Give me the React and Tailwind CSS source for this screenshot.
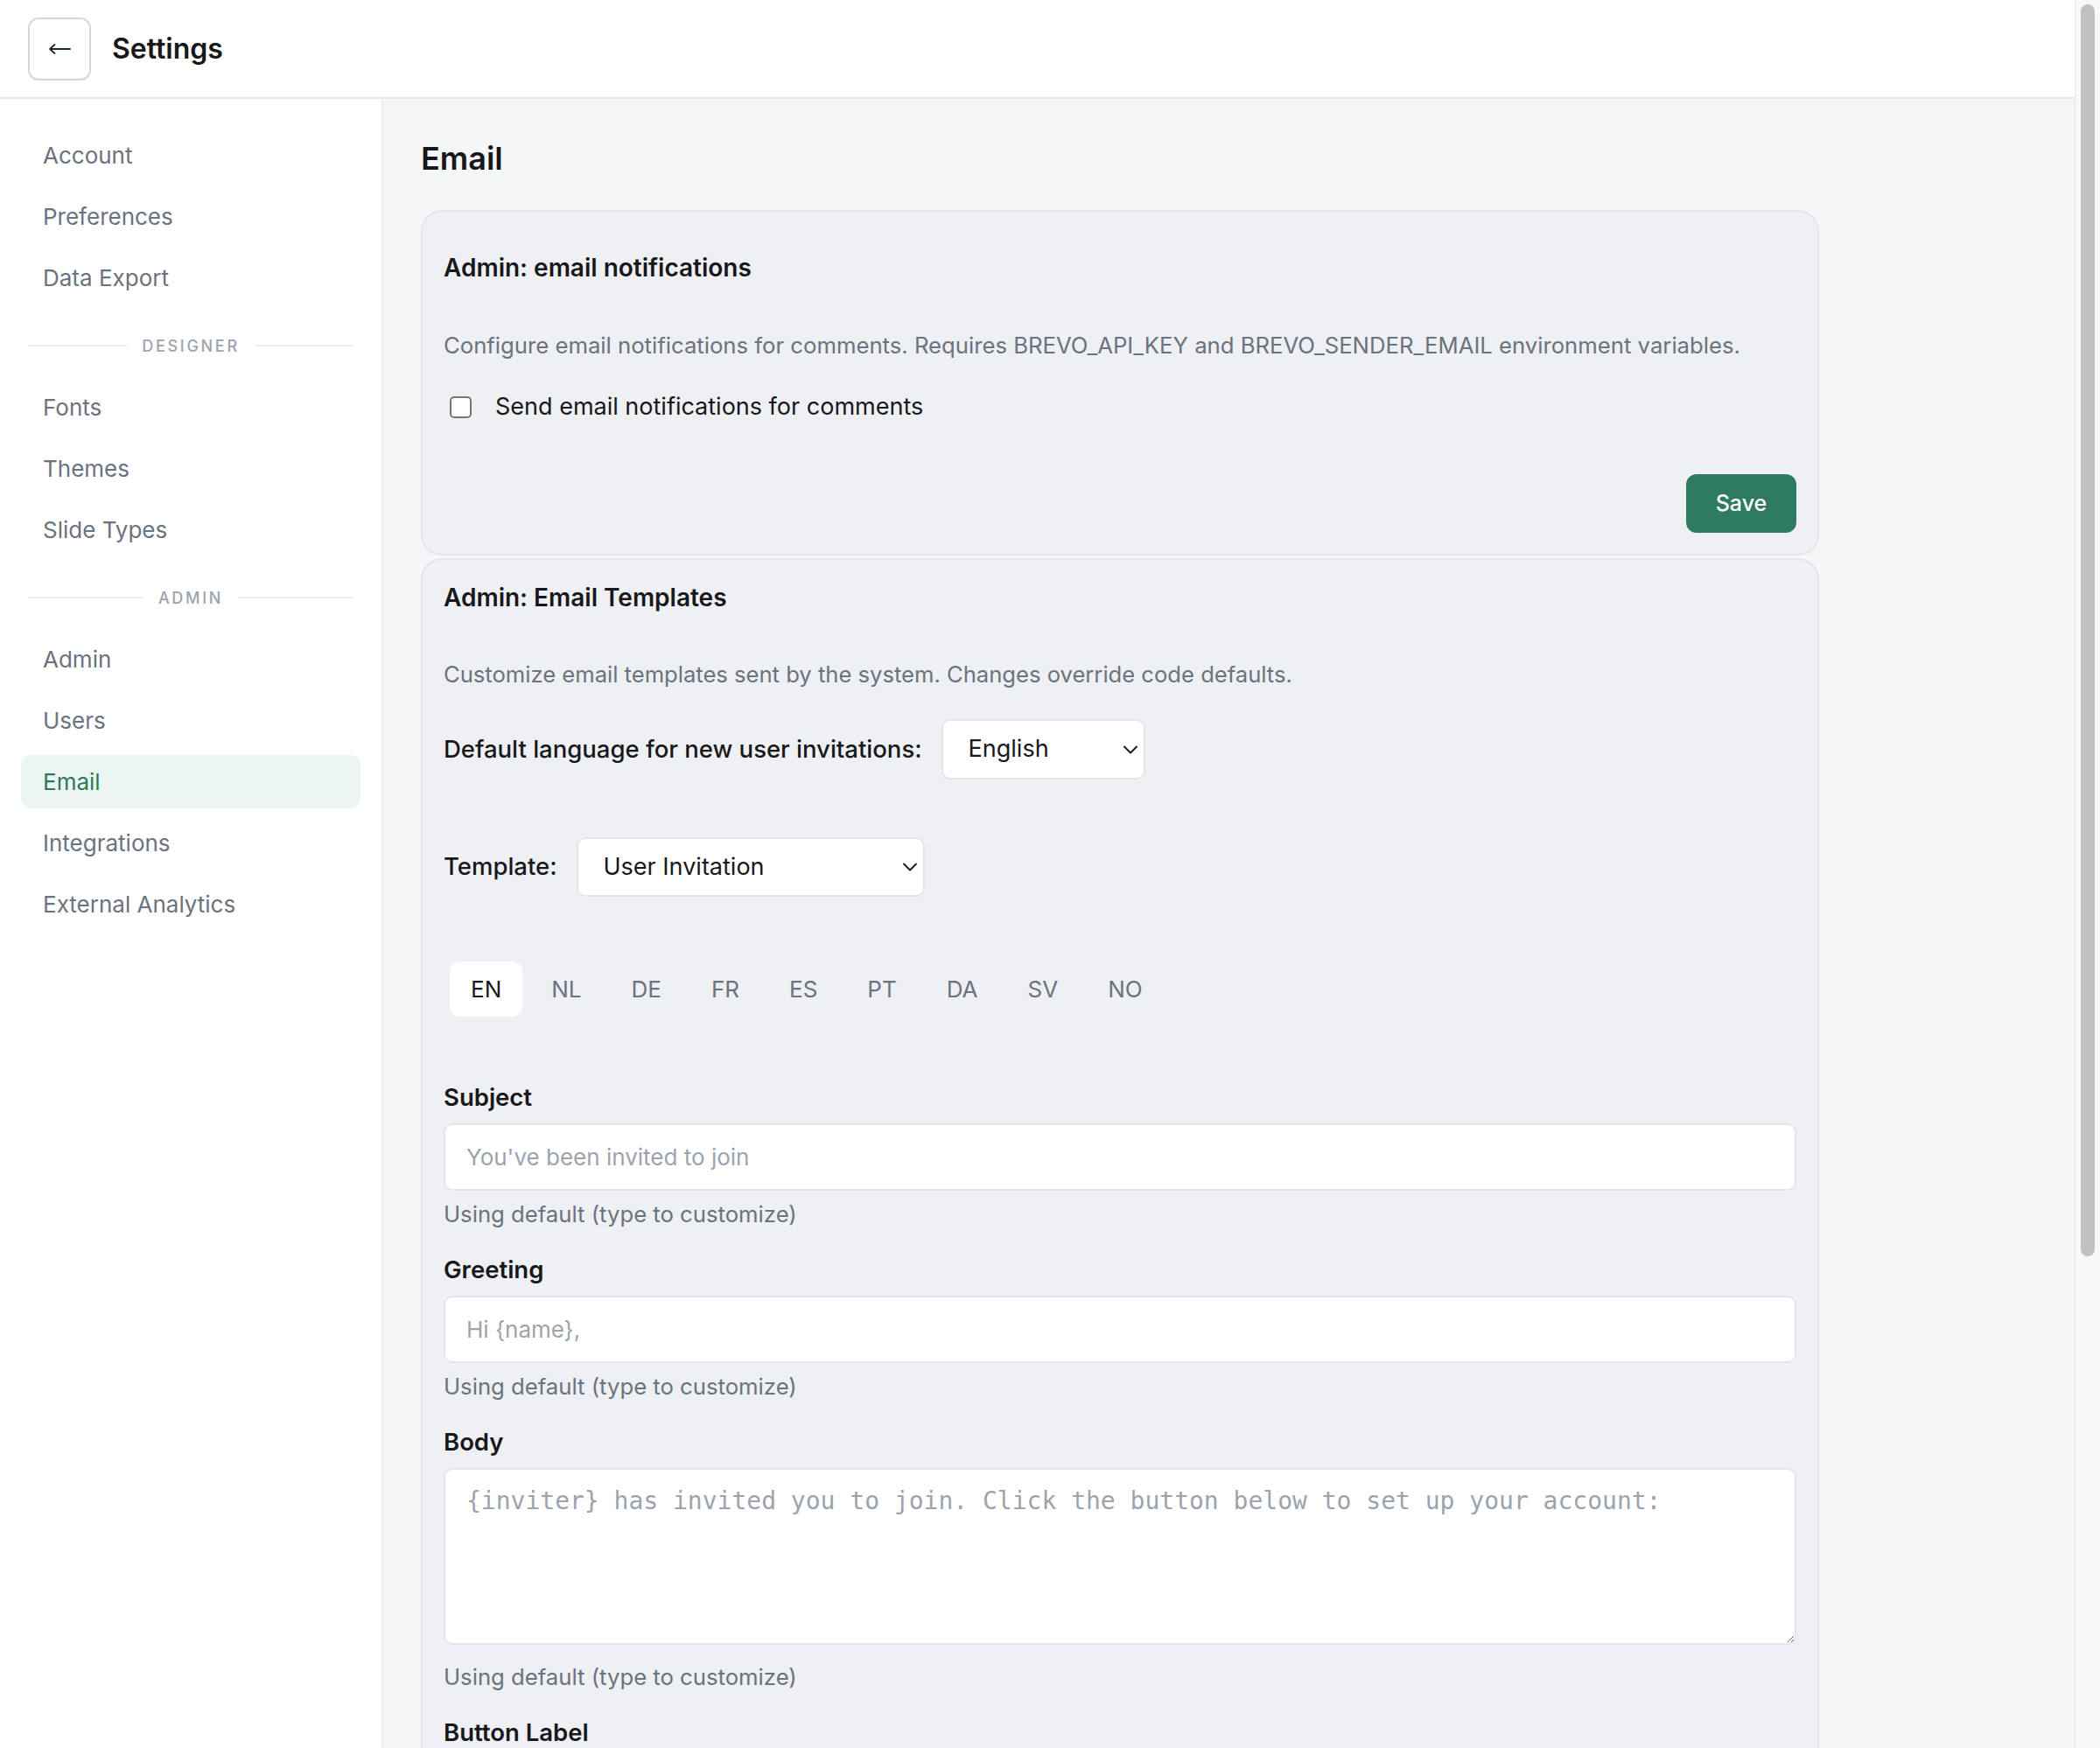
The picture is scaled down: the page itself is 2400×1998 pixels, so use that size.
import { ChevronDown } from 'lucide-react';

const sections = [
  { items: ['Account', 'Preferences', 'Data Export'] },
  { title: 'DESIGNER', items: ['Fonts', 'Themes', 'Slide Types'] },
  { title: 'ADMIN', items: ['Admin', 'Users', 'Email', 'Integrations', 'External Analytics'] },
];

const langs = ['EN', 'NL', 'DE', 'FR', 'ES', 'PT', 'DA', 'SV', 'NO'];

function NavDivider({ label }) {
  return (
    <div className="mt-[26px] mb-[28px] flex h-[24px] items-center gap-[17px] px-[8px]">
      <div className="h-[2px] flex-1 bg-[#eceef1]" />
      <span className="text-[18px] font-medium tracking-[0.15em] text-[#9ca3af]">{label}</span>
      <div className="h-[2px] flex-1 bg-[#eceef1]" />
    </div>
  );
}

function Select({ value, options, className }) {
  return (
    <div className={`relative ${className}`}>
      <select
        defaultValue={value}
        className="h-full w-full appearance-none rounded-[10px] border-2 border-[#e3e5e9] bg-white pl-[29px] text-[27px] text-[#18181b] outline-none"
      >
        {options.map((o) => (
          <option key={o}>{o}</option>
        ))}
      </select>
      <ChevronDown
        className="pointer-events-none absolute right-[3px] top-1/2 size-[28px] -translate-y-1/2 text-[#18181b]"
        strokeWidth={1.6}
      />
    </div>
  );
}

function Field({ label, placeholder, multiline }) {
  return (
    <div className="mt-[28px] first:mt-0">
      <div className="text-[27.5px] font-semibold leading-[36px] text-[#18181b]">{label}</div>
      {multiline ? (
        <textarea
          placeholder={placeholder}
          className="mt-[12px] block h-[202px] w-full rounded-[10px] border-2 border-[#e3e5e9] bg-white px-[24px] pt-[18px] font-['DejaVu_Sans_Mono',monospace] text-[28px] leading-[35px] text-[#18181b] outline-none placeholder:text-[#9ca3af]"
        />
      ) : (
        <input
          placeholder={placeholder}
          className="mt-[12px] block h-[77px] w-full rounded-[10px] border-2 border-[#e3e5e9] bg-white px-[24px] text-[26px] text-[#18181b] outline-none placeholder:text-[#9ca3af]"
        />
      )}
      <p className={`${multiline ? 'mt-[20px]' : 'mt-[10px]'} text-[25.7px] leading-[34px] text-[#6b7280]`}>
        Using default (type to customize)
      </p>
    </div>
  );
}

export default function App() {
  return (
    <div className="flex h-screen bg-[#f5f6f8] font-['Inter',sans-serif]">
      <div className="min-w-0 flex-1 overflow-hidden">
        {/* Header */}
        <header className="flex h-[113px] items-center gap-[24px] border-b-2 border-[#e5e7eb] bg-white px-[32px]">
          <button className="flex size-[72px] items-center justify-center rounded-[12px] border-2 border-[#d3d7dd] bg-white text-[#1f2937]">
            <svg width="26" height="14" viewBox="0 0 26 14" fill="none" stroke="currentColor" strokeWidth="1.8" strokeLinecap="round" strokeLinejoin="round">
              <path d="M25 7H2M7.5 2 2 7l5.5 5" />
            </svg>
          </button>
          <h1 className="text-[32px] font-semibold text-[#18181b]">Settings</h1>
        </header>

        <div className="flex">
          {/* Sidebar */}
          <aside className="flex w-[438px] shrink-0 flex-col border-r-2 border-[#eceef1] bg-white px-[24px] pt-[34px]">
            {sections.map((s) => (
              <div key={s.title || 'top'}>
                {s.title && <NavDivider label={s.title} />}
                {s.items.map((item) => (
                  <div
                    key={item}
                    className={`mb-[9px] flex h-[61px] items-center rounded-[12px] px-[25px] text-[26px] ${
                      item === 'Email' ? 'bg-[#ecf5f1] text-[#2b7a5a]' : 'text-[#6b7280]'
                    }`}
                  >
                    {item}
                  </div>
                ))}
              </div>
            ))}
          </aside>

          {/* Main */}
          <main className="flex-1 pl-[43px] pt-[44px] pb-[60px]">
            <h2 className="text-[36px] font-semibold leading-[48px] text-[#18181b]">Email</h2>

            {/* Email notifications */}
            <section className="mt-[35px] w-[1598px] rounded-[24px] border-2 border-[#e3e5e9] bg-[#eef0f3] px-[24px] pt-[46px] pb-[24px]">
              <h3 className="text-[28px] font-semibold leading-[36px] text-[#18181b]">Admin: email notifications</h3>
              <p className="mt-[54px] text-[25.7px] leading-[34px] text-[#6b7280]">
                Configure email notifications for comments. Requires BREVO_API_KEY and BREVO_SENDER_EMAIL environment
                variables.
              </p>
              <label className="mt-[35px] flex h-[36px] items-center gap-[27px]">
                <input
                  type="checkbox"
                  className="ml-[7px] size-[25px] appearance-none rounded-[5px] border-2 border-[#767676] bg-white"
                />
                <span className="text-[27px] text-[#18181b]">Send email notifications for comments</span>
              </label>
              <div className="mt-[59px] flex justify-end">
                <button className="h-[67px] w-[126px] rounded-[12px] bg-[#2e7b62] text-[25px] font-medium text-white">
                  Save
                </button>
              </div>
            </section>

            {/* Email templates */}
            <section className="mt-[3px] w-[1598px] rounded-[24px] border-2 border-[#e3e5e9] bg-[#eef0f3] px-[24px] pt-[25px] pb-[24px]">
              <h3 className="text-[28px] font-semibold leading-[36px] text-[#18181b]">Admin: Email Templates</h3>
              <p className="mt-[53px] text-[25.6px] leading-[34px] text-[#6b7280]">
                Customize email templates sent by the system. Changes override code defaults.
              </p>

              <div className="mt-[34px] flex items-center gap-[22px]">
                <span className="text-[27.5px] font-medium text-[#18181b]">
                  Default language for new user invitations:
                </span>
                <Select value="English" options={['English', 'Nederlands', 'Deutsch']} className="h-[69px] w-[233px]" />
              </div>

              <div className="mt-[66px] flex items-center gap-[22px]">
                <span className="text-[27.5px] font-medium text-[#18181b]">Template:</span>
                <Select
                  value="User Invitation"
                  options={['User Invitation', 'Password Reset', 'Comment Notification']}
                  className="h-[68px] w-[398px]"
                />
              </div>

              <div className="mt-[74px] ml-[7px] flex gap-[9px]">
                {langs.map((l) => (
                  <button
                    key={l}
                    className={`h-[63px] rounded-[12px] px-[24px] text-[26px] ${
                      l === 'EN' ? 'bg-white text-[#18181b]' : 'text-[#6b7280]'
                    }`}
                  >
                    {l}
                  </button>
                ))}
              </div>

              <div className="mt-[74px]">
                <Field label="Subject" placeholder="You've been invited to join" />
                <Field label="Greeting" placeholder="Hi {name}," />
                <Field
                  label="Body"
                  multiline
                  placeholder="{inviter} has invited you to join. Click the button below to set up your account:"
                />
                <Field label="Button Label" placeholder="Set up account" />
                <Field
                  label="Footer"
                  multiline
                  placeholder="If you didn't expect this invitation, you can ignore this email."
                />
              </div>

              <div className="mt-[40px] flex justify-end gap-[16px]">
                <button className="h-[67px] rounded-[12px] border-2 border-[#d9dce1] bg-white px-[28px] text-[25px] font-medium text-[#18181b]">
                  Reset to default
                </button>
                <button className="h-[67px] w-[126px] rounded-[12px] bg-[#2e7b62] text-[25px] font-medium text-white">
                  Save
                </button>
              </div>
            </section>
          </main>
        </div>
      </div>

      {/* Scrollbar */}
      <div className="w-[29px] shrink-0 border-l border-[#e6e6e6] bg-[#f8f8f8] px-[6px] pt-[5px]">
        <div className="h-[1431px] rounded-full bg-[#c1c1c1]" />
      </div>
    </div>
  );
}
